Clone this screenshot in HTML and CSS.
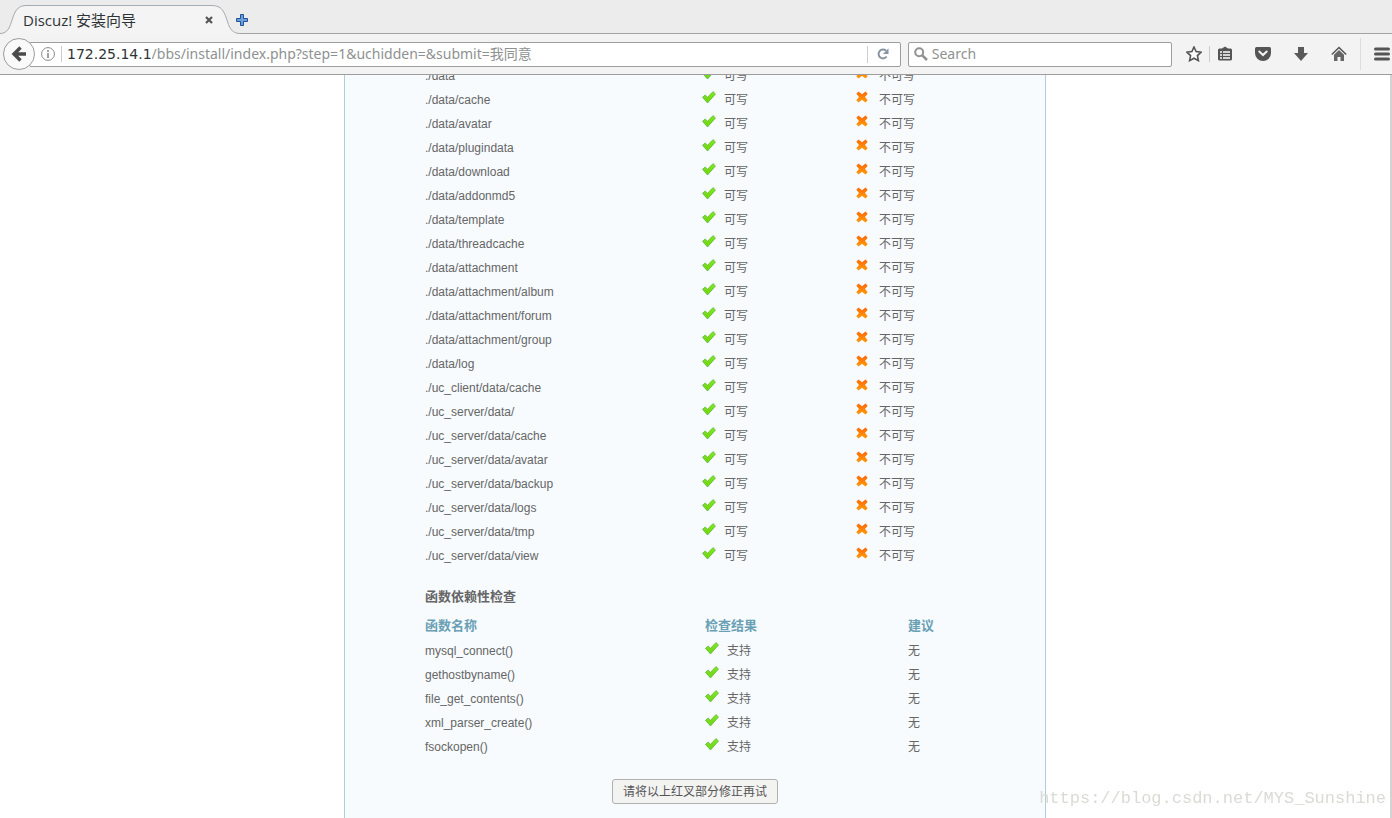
FILE: index.html
```html
<!DOCTYPE html>
<html lang="zh-CN">
<head>
<meta charset="utf-8">
<title>Discuz! 安装向导</title>
<link rel="stylesheet" href="styles.css">
</head>
<body>
<svg class="defs" aria-hidden="true">
  <defs>
    <linearGradient id="green" x1="0" y1="0" x2="0" y2="1"><stop offset="0" stop-color="#8ae81c"/><stop offset="1" stop-color="#68d60c"/></linearGradient>
    <linearGradient id="orange" x1="0" y1="0" x2="0" y2="1"><stop offset="0" stop-color="#ff6a08"/><stop offset="1" stop-color="#ff9a08"/></linearGradient>
    <symbol id="ok" viewBox="0 0 14 13"><path d="M.5 6.300 3.200 4l2.300 2.300L11 .6 13.500 3 5.500 12z" fill="url(#green)" stroke="#5cb548" stroke-width=".8" stroke-linejoin="round"/></symbol>
    <symbol id="no" viewBox="0 0 12 12"><path d="M2.500.5 6 3.200 9.500.5 11.700 2.700 9 6l2.700 3.300-2.200 2.200L6 8.800l-3.500 2.700L.3 9.300 3 6 .3 2.700z" fill="url(#orange)"/></symbol>
  </defs>
</svg>
<header class="browser">
  <div class="tabs">
    <div class="tab">
      <svg class="tab-shape" viewBox="0 0 240 34" aria-hidden="true"><path d="M0 33.500C16 33.500 8 5.500 26 5.500H212C232 5.500 222 33.500 240 33.500V34H0z" fill="#f4f4f4"/><path d="M0 33.500C16 33.500 8 5.500 26 5.500H212C232 5.500 222 33.500 240 33.500" fill="none" stroke="#a6abb0"/></svg>
      <span class="tab-title">Discuz! 安装向导</span>
      <button class="tab-close" aria-label="关闭标签页"><svg width="8" height="8" viewBox="0 0 8 8"><path d="M1 1l6 6M7 1L1 7" stroke="#555" stroke-width="2.200"/></svg></button>
    </div>
    <button class="tab-new" aria-label="新建标签页"><svg width="12" height="12" viewBox="0 0 12 12"><path d="M4.500.5h3v4h4v3h-4v4h-3v-4h-4v-3h4z" fill="#6d9fdb" stroke="#20529a"/></svg></button>
  </div>
  <div class="toolbar">
    <button class="back" aria-label="后退"><svg width="32" height="32" viewBox="0 0 32 32"><circle cx="16" cy="16" r="15.500" fill="#fafafa" stroke="#9b9b9b"/><path d="M17.500 9.500 11 16l6.500 6.500M11.500 16H23" fill="none" stroke="#4b4b4b" stroke-width="3.400"/></svg></button>
    <div class="address">
      <svg class="info" width="14" height="14" viewBox="0 0 14 14"><circle cx="7" cy="7" r="6.400" fill="none" stroke="#8a8a8a"/><path d="M7 3v2M7 6v5" stroke="#8a8a8a" stroke-width="1.600"/></svg>
      <label class="host" for="url">172.25.14.1</label>
      <input id="url" class="url" type="text" value="/bbs/install/index.php?step=1&amp;uchidden=&amp;submit=我同意">
      <button class="reload" aria-label="刷新"><svg width="12" height="12" viewBox="0 0 12 12"><path d="M9.600 8.500A4.400 4.400 0 1 1 9 2.800" fill="none" stroke="#8795a3" stroke-width="2"/><path d="M11.500.3V6H6z" fill="#8795a3"/></svg></button>
    </div>
    <div class="search">
      <svg width="14" height="14" viewBox="0 0 14 14"><circle cx="5.200" cy="5.200" r="4" fill="none" stroke="#929292" stroke-width="2"/><path d="M8.300 8.300 13 13" stroke="#929292" stroke-width="2.600"/></svg>
      <input type="search" placeholder="Search" aria-label="Search">
    </div>
    <nav class="tools">
      <button class="tool star" aria-label="收藏"><svg width="16" height="16" viewBox="0 0 16 16"><path d="M8 1l2.100 4.600 5 .6-3.700 3.400 1 5L8 12.200l-4.400 2.400 1-5L.9 6.200l5-.6z" fill="#fff" stroke="#555" stroke-width="1.600"/></svg></button>
      <button class="tool list" aria-label="书签"><svg width="16" height="16" viewBox="0 0 16 16"><path d="M2.500 2.500H5L8 .5l3 2h2.500q1.500 0 1.500 1.500v9q0 1.500-1.500 1.500h-11Q1 14.500 1 13V4q0-1.500 1.500-1.500z" fill="#555"/><path d="M3 6h2M6 6h7M3 9h2M6 9h7M3 12h2M6 12h7" stroke="#fff" stroke-width="1.500"/></svg></button>
      <button class="tool" aria-label="Pocket"><svg width="16" height="16" viewBox="0 0 16 16"><path d="M1.500 1h13Q16 1 16 2.500V7A8 8 0 0 1 0 7V2.500Q0 1 1.500 1z" fill="#555"/><path d="M4.300 5.500 8 9l3.700-3.500" fill="none" stroke="#f4f4f4" stroke-width="2" stroke-linecap="round"/></svg></button>
      <button class="tool" aria-label="下载"><svg width="16" height="16" viewBox="0 0 16 16"><path d="M5 1h6v6h4l-7 8-7-8h4z" fill="#5a5a5a"/></svg></button>
      <button class="tool" aria-label="主页"><svg width="16" height="16" viewBox="0 0 16 16"><path d="M.8 8.500 8 1.500l7.200 7" fill="none" stroke="#555" stroke-width="1.500"/><path d="M3 8.800 8 4l5 4.800V15H9.500v-4h-3v4H3z" fill="#666"/></svg></button>
      <button class="tool menu" aria-label="菜单"><svg width="16" height="14" viewBox="0 0 16 14"><path d="M1.500 2h13M1.500 7h13M1.500 12h13" stroke="#555" stroke-width="3" stroke-linecap="round"/></svg></button>
    </nav>
  </div>
</header>
<main class="viewport">
  <div class="panel">
    <table class="checks dirs">
      <tbody>
        <tr><td>./data</td><td><svg class="ok"><use href="#ok"/></svg>可写</td><td><svg class="no"><use href="#no"/></svg>不可写</td></tr>
        <tr><td>./data/cache</td><td><svg class="ok"><use href="#ok"/></svg>可写</td><td><svg class="no"><use href="#no"/></svg>不可写</td></tr>
        <tr><td>./data/avatar</td><td><svg class="ok"><use href="#ok"/></svg>可写</td><td><svg class="no"><use href="#no"/></svg>不可写</td></tr>
        <tr><td>./data/plugindata</td><td><svg class="ok"><use href="#ok"/></svg>可写</td><td><svg class="no"><use href="#no"/></svg>不可写</td></tr>
        <tr><td>./data/download</td><td><svg class="ok"><use href="#ok"/></svg>可写</td><td><svg class="no"><use href="#no"/></svg>不可写</td></tr>
        <tr><td>./data/addonmd5</td><td><svg class="ok"><use href="#ok"/></svg>可写</td><td><svg class="no"><use href="#no"/></svg>不可写</td></tr>
        <tr><td>./data/template</td><td><svg class="ok"><use href="#ok"/></svg>可写</td><td><svg class="no"><use href="#no"/></svg>不可写</td></tr>
        <tr><td>./data/threadcache</td><td><svg class="ok"><use href="#ok"/></svg>可写</td><td><svg class="no"><use href="#no"/></svg>不可写</td></tr>
        <tr><td>./data/attachment</td><td><svg class="ok"><use href="#ok"/></svg>可写</td><td><svg class="no"><use href="#no"/></svg>不可写</td></tr>
        <tr><td>./data/attachment/album</td><td><svg class="ok"><use href="#ok"/></svg>可写</td><td><svg class="no"><use href="#no"/></svg>不可写</td></tr>
        <tr><td>./data/attachment/forum</td><td><svg class="ok"><use href="#ok"/></svg>可写</td><td><svg class="no"><use href="#no"/></svg>不可写</td></tr>
        <tr><td>./data/attachment/group</td><td><svg class="ok"><use href="#ok"/></svg>可写</td><td><svg class="no"><use href="#no"/></svg>不可写</td></tr>
        <tr><td>./data/log</td><td><svg class="ok"><use href="#ok"/></svg>可写</td><td><svg class="no"><use href="#no"/></svg>不可写</td></tr>
        <tr><td>./uc_client/data/cache</td><td><svg class="ok"><use href="#ok"/></svg>可写</td><td><svg class="no"><use href="#no"/></svg>不可写</td></tr>
        <tr><td>./uc_server/data/</td><td><svg class="ok"><use href="#ok"/></svg>可写</td><td><svg class="no"><use href="#no"/></svg>不可写</td></tr>
        <tr><td>./uc_server/data/cache</td><td><svg class="ok"><use href="#ok"/></svg>可写</td><td><svg class="no"><use href="#no"/></svg>不可写</td></tr>
        <tr><td>./uc_server/data/avatar</td><td><svg class="ok"><use href="#ok"/></svg>可写</td><td><svg class="no"><use href="#no"/></svg>不可写</td></tr>
        <tr><td>./uc_server/data/backup</td><td><svg class="ok"><use href="#ok"/></svg>可写</td><td><svg class="no"><use href="#no"/></svg>不可写</td></tr>
        <tr><td>./uc_server/data/logs</td><td><svg class="ok"><use href="#ok"/></svg>可写</td><td><svg class="no"><use href="#no"/></svg>不可写</td></tr>
        <tr><td>./uc_server/data/tmp</td><td><svg class="ok"><use href="#ok"/></svg>可写</td><td><svg class="no"><use href="#no"/></svg>不可写</td></tr>
        <tr><td>./uc_server/data/view</td><td><svg class="ok"><use href="#ok"/></svg>可写</td><td><svg class="no"><use href="#no"/></svg>不可写</td></tr>
      </tbody>
    </table>
    <h2>函数依赖性检查</h2>
    <table class="checks funcs">
      <thead><tr><th>函数名称</th><th>检查结果</th><th>建议</th></tr></thead>
      <tbody>
        <tr><td>mysql_connect()</td><td><svg class="ok"><use href="#ok"/></svg>支持</td><td>无</td></tr>
        <tr><td>gethostbyname()</td><td><svg class="ok"><use href="#ok"/></svg>支持</td><td>无</td></tr>
        <tr><td>file_get_contents()</td><td><svg class="ok"><use href="#ok"/></svg>支持</td><td>无</td></tr>
        <tr><td>xml_parser_create()</td><td><svg class="ok"><use href="#ok"/></svg>支持</td><td>无</td></tr>
        <tr><td>fsockopen()</td><td><svg class="ok"><use href="#ok"/></svg>支持</td><td>无</td></tr>
      </tbody>
    </table>
    <div class="actions"><button class="retry">请将以上红叉部分修正再试</button></div>
  </div>
</main>
<div class="watermark">https://blog.csdn.net/MYS_Sunshine</div>
</body>
</html>
```
FILE: styles.css
```css
* { box-sizing: border-box; }
body {
  margin: 0;
  height: 100vh;
  display: flex;
  flex-direction: column;
  overflow: hidden;
  background: #fff;
  color: #666;
  font: 12px/24px "Liberation Sans", "Noto Sans CJK SC", sans-serif;
}
button, input { font: inherit; color: inherit; }
button { padding: 0; border: 0; background: none; }
svg { display: block; flex: none; }
.defs { position: absolute; width: 0; height: 0; }

.browser {
  flex: none;
  font: 14px/22px "Noto Sans", "Noto Sans CJK SC", sans-serif;
  color: #2e3436;
}
.tabs {
  display: flex;
  height: 34px;
  background: #ececec;
  border-bottom: 1px solid #a3a3a3;
}
.tab {
  position: relative;
  display: flex;
  align-items: center;
  justify-content: space-between;
  width: 240px;
  height: 34px;
  padding: 6px 27px 0 23px;
}
.tab-shape { position: absolute; left: 0; top: 0; width: 240px; height: 34px; }
.tab-title, .tab-close { position: relative; }
.tab-title { font-family: "Open Sans", "Noto Sans CJK SC", sans-serif; font-size: 15px; }
.tab-new { margin-top: 7px; margin-left: -4px; }

.toolbar {
  display: flex;
  align-items: center;
  height: 41px;
  padding-left: 3px;
  background: #f3f3f3;
  border-bottom: 1px solid #9d9d9d;
}
.back { position: relative; z-index: 1; }
.address, .search {
  display: flex;
  align-items: center;
  height: 25px;
  background: #fff;
  border: 1px solid #9d9d9d;
  border-radius: 2px;
}
.address { flex: 858 1 0; margin-left: -6px; padding-left: 11px; }
.host { margin-left: 6px; padding-left: 5px; font-family: "DejaVu Sans", sans-serif; line-height: 16px; border-left: 1px solid #ccc; }
.url { flex: 1; min-width: 0; padding: 0; border: 0; outline: 0; background: none; color: #8e9192; }
.reload { height: 17px; padding: 0 11px 0 9px; border-left: 1px solid #ccc; }
.search { flex: 252 1 0; margin-left: 7px; padding: 0 5px; gap: 4px; }
.search input { flex: 1; min-width: 0; padding: 0; border: 0; outline: 0; background: none; }
.search input::placeholder { color: #8e9192; opacity: 1; }
.tools { display: flex; align-items: center; height: 32px; margin-left: 14px; }
.tool { margin-right: 22px; }
.star { margin-right: 7px; }
.list { padding-left: 7px; border-left: 1px solid #ccc; }
.menu { height: 32px; margin: 0 2px 0 -9px; padding-left: 13px; border-left: 1px solid #ddd; }

.viewport {
  flex: 1;
  min-height: 0;
  overflow: hidden;
  display: flex;
  justify-content: center;
  border-right: 2px solid #d3d3d3;
}
.panel {
  width: 702px;
  margin-top: -11px;
  padding: 0 80px;
  background: #f7fbfe;
  border: 1px solid #b2cdd8;
  border-width: 0 1px;
}
.checks { width: 100%; table-layout: fixed; border-collapse: collapse; }
.checks td, .checks th { height: 24px; padding: 0; text-align: left; white-space: nowrap; }
.dirs td:nth-child(1) { width: 277px; }
.dirs td:nth-child(2) { width: 154px; }
.funcs th:nth-child(1) { width: 280px; }
.funcs th:nth-child(2) { width: 203px; }
.checks th { height: 27px; font-size: 13px; color: #69a0b3; }
.ok, .no { display: inline-block; }
.ok { width: 14px; height: 13px; margin-right: 8px; vertical-align: 0; }
.no { width: 12px; height: 12px; margin-right: 11px; vertical-align: 1px; }
h2 { margin: 17px 0 3px; font-size: 13px; line-height: 24px; }
.actions { display: flex; justify-content: center; padding-top: 20px; }
.retry {
  height: 25px;
  padding: 0 10px;
  line-height: 22px;
  background: #f3f3f2;
  border: 1px solid #b0b0ae;
  border-radius: 3px;
  color: #555;
}
.watermark {
  position: fixed;
  right: 6px;
  bottom: 7px;
  font: 17px/24px "Liberation Mono", monospace;
  color: #dadad6;
}
```
